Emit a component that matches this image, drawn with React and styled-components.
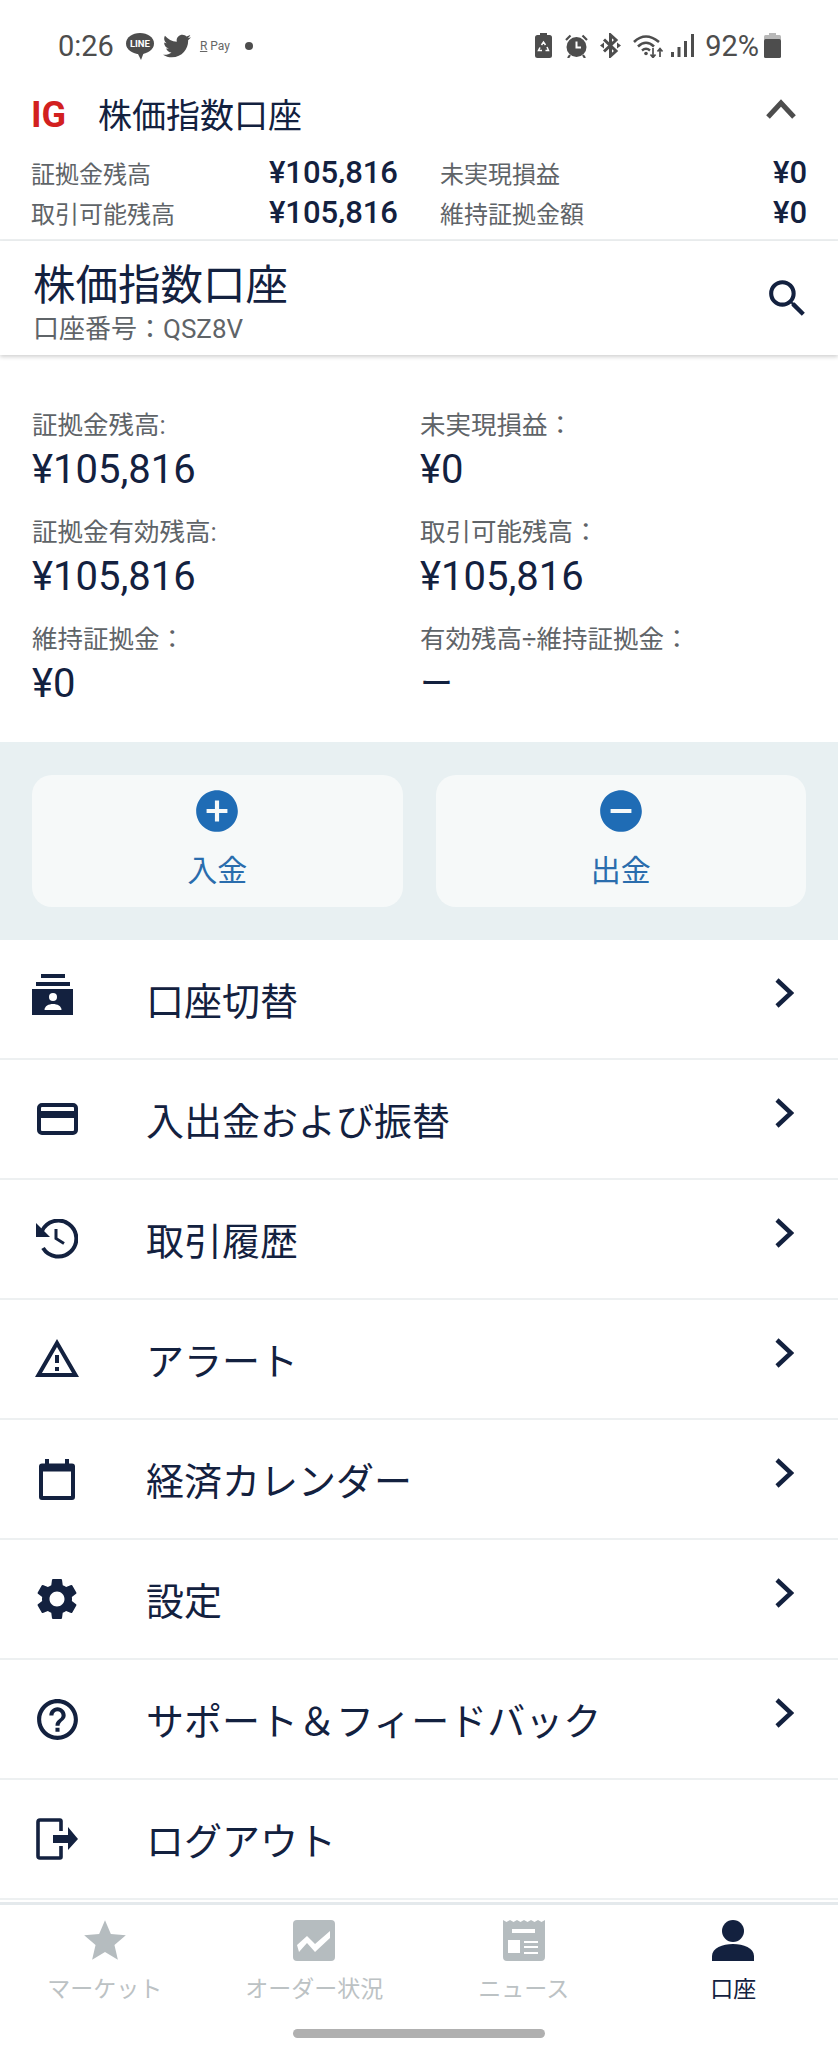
import styled, { createGlobalStyle } from "styled-components"
import { FaTwitter } from "react-icons/fa"
import {
    MdAddCircle,
    MdRemoveCircle,
    MdOutlineWarningAmber,
    MdSettings,
    MdHelpOutline,
    MdSearch,
    MdStar,
} from "react-icons/md"

const NAVY = "#13213f"
const GREY = "#5f6468"
const STATUS = "#4d4d4d"
const TAB_OFF = "#b5bcbf"

const GlobalStyle = createGlobalStyle`
    html, body {
        margin: 0;
        padding: 0;
        background: #fff;
    }
    * {
        box-sizing: border-box;
    }
    body {
        font-family: Roboto, "Noto Sans CJK JP", sans-serif;
        color: ${NAVY};
    }
`

const RecycleBattery = () => (
    <svg width="17" height="25" viewBox="0 0 17 25">
        <rect x="5" y="0" width="7" height="3" fill={STATUS} />
        <rect x="0" y="2" width="17" height="23" rx="2.5" fill={STATUS} />
        <path d="M6.5 12 L8.5 9 L10.5 12 M12 14 L13.5 17.5 L10.5 17.5 M7 17.5 L3.5 17.5 L5 14.5" stroke="#fff" strokeWidth="1.5" fill="none" />
    </svg>
)

const AlarmClock = () => (
    <svg width="23" height="24" viewBox="0 0 23 24">
        <circle cx="11.5" cy="13" r="10" fill={STATUS} />
        <path d="M11.5 7.5 V13.5 H16" stroke="#fff" strokeWidth="2" fill="none" />
        <path d="M1 6 L5.5 1.5 M22 6 L17.5 1.5" stroke={STATUS} strokeWidth="2.2" />
        <path d="M5 21 L3 24 M18 21 L20 24" stroke={STATUS} strokeWidth="2.2" />
    </svg>
)

const Bluetooth = () => (
    <svg width="21" height="25" viewBox="0 0 21 25">
        <path d="M4 6.5 L16 18 L10.5 23 V2 L16 7 L4 18.5" stroke={STATUS} strokeWidth="3" fill="none" />
        <path d="M0 12.5 L4 9.5 V15.5 Z M21 12.5 L17 9.5 V15.5 Z" fill={STATUS} />
    </svg>
)

const WifiSignal = () => (
    <svg width="31" height="24" viewBox="0 0 31 24">
        <path d="M1 8 Q12.5 -3 26 8" stroke={STATUS} strokeWidth="2.6" fill="none" />
        <path d="M5 12.5 Q13 5 21 12.5" stroke={STATUS} strokeWidth="2.6" fill="none" />
        <path d="M9 16.5 Q13 13 17 16.5" stroke={STATUS} strokeWidth="2.4" fill="none" />
        <circle cx="13" cy="19.5" r="1.8" fill={STATUS} />
        <path d="M20 14 V23 M17.5 20.5 L20 23.5 L22.5 20.5 M27 23 V15 M24.5 17.5 L27 14.5 L29.5 17.5" stroke={STATUS} strokeWidth="1.7" fill="none" />
    </svg>
)

const SignalBars = () => (
    <svg width="23" height="23" viewBox="0 0 23 23" fill={STATUS}>
        <rect x="0" y="18" width="3" height="5" />
        <rect x="6.5" y="13" width="3" height="10" />
        <rect x="13" y="7" width="3" height="16" />
        <rect x="20" y="0" width="3" height="23" />
    </svg>
)

const Battery = () => (
    <svg width="17" height="25" viewBox="0 0 17 25">
        <rect x="5" y="0" width="7" height="3" fill="#b8b8b8" />
        <rect x="0" y="2" width="17" height="5" rx="1.5" fill="#b8b8b8" />
        <rect x="0" y="6" width="17" height="19" rx="1.5" fill={STATUS} />
    </svg>
)

const AccountCard = () => (
    <svg width="50" height="42" viewBox="0 0 50 42" fill={NAVY}>
        <rect x="9" y="0" width="24" height="4" />
        <rect x="4" y="8" width="34" height="4" />
        <rect x="0" y="15" width="41" height="26" />
        <circle cx="21" cy="23" r="4" fill="#fff" />
        <path d="M12.5 36 C12.5 28 29.5 28 29.5 36 Z" fill="#fff" />
    </svg>
)

const PaymentCard = () => (
    <svg width="41" height="32" viewBox="0 0 41 32">
        <rect x="2" y="2" width="37" height="28" rx="3" fill="none" stroke={NAVY} strokeWidth="4" />
        <rect x="2" y="8" width="37" height="7" fill={NAVY} />
    </svg>
)

const HistoryClock = () => (
    <svg width="42" height="40" viewBox="0 0 42 40" fill="none" stroke={NAVY}>
        <path d="M6 12 A18 18 0 1 1 7 29" strokeWidth="4" />
        <path d="M0 4 V18 H14 Z" fill={NAVY} stroke="none" />
        <path d="M20 10 V19.5 L28 24.5" strokeWidth="3" />
    </svg>
)

const CalendarPage = () => (
    <svg width="36" height="41" viewBox="0 0 36 41" fill={NAVY}>
        <rect x="6" y="0" width="4" height="6" />
        <rect x="26" y="0" width="4" height="6" />
        <path fillRule="evenodd" d="M3 4.5 H33 Q36 4.5 36 7.5 V38 Q36 41 33 41 H3 Q0 41 0 38 V7.5 Q0 4.5 3 4.5 Z M4 12.5 V37 H32 V12.5 Z" />
    </svg>
)

const Logout = () => (
    <svg width="42" height="42" viewBox="0 0 42 42" fill={NAVY}>
        <path d="M25 13 V3 Q25 2 24 2 H4 Q2 2 2 4 V38 Q2 40 4 40 H24 Q25 40 25 39 V28" stroke={NAVY} strokeWidth="3.6" fill="none" />
        <path d="M17 17 H32 V9 L42 21 L32 32 V25 H17 Z" />
    </svg>
)

const ChartTab = () => (
    <svg width="42" height="41" viewBox="0 0 42 41">
        <rect width="42" height="41" rx="4" fill={TAB_OFF} />
        <path d="M4 25 L14 16 L22 24 L37 11 V18 L22 32 L14 23 L6 32 Z" fill="#fff" />
    </svg>
)

const NewsTab = () => (
    <svg width="42" height="41" viewBox="0 0 42 41">
        <path d="M0 0 L3.5 2 L7 0 L10.5 2 L14 0 L17.5 2 L21 0 L24.5 2 L28 0 L31.5 2 L35 0 L38.5 2 L42 0 V37 Q42 41 38 41 H4 Q0 41 0 37 Z" fill={TAB_OFF} />
        <rect x="9" y="9" width="23" height="4" fill="#fff" />
        <rect x="5" y="20" width="12" height="13" fill="#fff" />
        <rect x="21" y="21" width="14" height="2" fill="#fff" />
        <rect x="21" y="26" width="14" height="2" fill="#fff" />
        <rect x="21" y="32" width="14" height="2" fill="#fff" />
    </svg>
)

const PersonTab = () => (
    <svg width="42" height="41" viewBox="0 0 42 41" fill={NAVY}>
        <circle cx="21" cy="11" r="11" />
        <path d="M0 41 V36 C0 20 42 20 42 36 V41 Z" />
    </svg>
)

const ChevronRight = () => (
    <svg width="20" height="32" viewBox="0 0 20 32" fill="none">
        <path d="M3 3 L17 16 L3 29" stroke={NAVY} strokeWidth="4.5" />
    </svg>
)

const ChevronUp = () => (
    <svg width="30" height="20" viewBox="0 0 30 20" fill="none">
        <path d="M2 18 L15 4 L28 18" stroke={STATUS} strokeWidth="5" />
    </svg>
)

const balances = [
    ["証拠金残高:", "¥105,816"],
    ["未実現損益：", "¥0"],
    ["証拠金有効残高:", "¥105,816"],
    ["取引可能残高：", "¥105,816"],
    ["維持証拠金：", "¥0"],
    ["有効残高÷維持証拠金：", "ー"],
]

const menuItems = [
    { label: "口座切替", icon: <AccountCard />, arrow: true, lift: true },
    { label: "入出金および振替", icon: <PaymentCard />, arrow: true },
    { label: "取引履歴", icon: <HistoryClock />, arrow: true },
    { label: "アラート", icon: <MdOutlineWarningAmber size={48} />, arrow: true },
    { label: "経済カレンダー", icon: <CalendarPage />, arrow: true },
    { label: "設定", icon: <MdSettings size={50} />, arrow: true },
    { label: "サポート＆フィードバック", icon: <MdHelpOutline size={49} />, arrow: true },
    { label: "ログアウト", icon: <Logout />, arrow: false },
]

const tabs = [
    { label: "マーケット", icon: <MdStar size={50} color={TAB_OFF} /> },
    { label: "オーダー状況", icon: <ChartTab /> },
    { label: "ニュース", icon: <NewsTab /> },
    { label: "口座", icon: <PersonTab />, active: true },
]

const App = () => {
    return (
        <Page>
            <GlobalStyle />
            <StatusBar>
                <StatusGroup>
                    <Clock>0:26</Clock>
                    <StatusItem $gap={12}><LineBadge>LINE</LineBadge></StatusItem>
                    <StatusItem $gap={9}><FaTwitter size={28} color={STATUS} /></StatusItem>
                    <StatusItem $gap={9}><PayMark><u>R</u> Pay</PayMark></StatusItem>
                    <StatusItem $gap={19}><StatusDot /></StatusItem>
                </StatusGroup>
                <StatusGroup>
                    <RecycleBattery />
                    <StatusItem $gap={13}><AlarmClock /></StatusItem>
                    <StatusItem $gap={12}><Bluetooth /></StatusItem>
                    <StatusItem $gap={12}><WifiSignal /></StatusItem>
                    <StatusItem $gap={7}><SignalBars /></StatusItem>
                    <StatusItem $gap={11}><BatteryText>92%</BatteryText></StatusItem>
                    <StatusItem $gap={5}><Battery /></StatusItem>
                </StatusGroup>
            </StatusBar>

            <AccountStrip>
                <StripHeader>
                    <Logo>IG</Logo>
                    <StripTitle>株価指数口座</StripTitle>
                    <Collapse><ChevronUp /></Collapse>
                </StripHeader>
                <StripGrid>
                    <StripPair><StripLabel>証拠金残高</StripLabel><StripValue>¥105,816</StripValue></StripPair>
                    <StripPair><StripLabel>未実現損益</StripLabel><StripValue>¥0</StripValue></StripPair>
                    <StripPair><StripLabel>取引可能残高</StripLabel><StripValue>¥105,816</StripValue></StripPair>
                    <StripPair><StripLabel>維持証拠金額</StripLabel><StripValue>¥0</StripValue></StripPair>
                </StripGrid>
            </AccountStrip>

            <TopBar>
                <TitleBlock>
                    <PageTitle>株価指数口座</PageTitle>
                    <AccountNo>口座番号：QSZ8V</AccountNo>
                </TitleBlock>
                <MdSearch size={49} />
            </TopBar>

            <BalanceGrid>
                {balances.map(([label, value]) => (
                    <div key={label}>
                        <BalanceLabel>{label}</BalanceLabel>
                        <BalanceValue $dash={value === "ー"}>{value}</BalanceValue>
                    </div>
                ))}
            </BalanceGrid>

            <FundsBand>
                <FundsButton>
                    <MdAddCircle size={50} />
                    <span>入金</span>
                </FundsButton>
                <FundsButton>
                    <MdRemoveCircle size={50} />
                    <span>出金</span>
                </FundsButton>
            </FundsBand>

            <Menu>
                {menuItems.map((item) => (
                    <MenuRow key={item.label}>
                        <MenuIcon $lift={item.lift}>{item.icon}</MenuIcon>
                        <MenuLabel>{item.label}</MenuLabel>
                        {item.arrow && <MenuArrow><ChevronRight /></MenuArrow>}
                    </MenuRow>
                ))}
            </Menu>

            <TabBar>
                <Tabs>
                    {tabs.map((tab) => (
                        <Tab key={tab.label} $active={tab.active}>
                            <TabIcon>{tab.icon}</TabIcon>
                            <span>{tab.label}</span>
                        </Tab>
                    ))}
                </Tabs>
                <HomeBar />
            </TabBar>
        </Page>
    )
}

export default App

const Page = styled.div`
    width: 838px;
    height: 2048px;
    display: flex;
    flex-direction: column;
    overflow: hidden;
    background: #fff;
`

const StatusBar = styled.div`
    height: 92px;
    padding: 0 57px 1px 58px;
    display: flex;
    align-items: center;
    justify-content: space-between;
    color: ${STATUS};
`

const StatusGroup = styled.div`
    display: flex;
    align-items: center;
`

const StatusItem = styled.span`
    display: flex;
    margin-left: ${(props) => props.$gap}px;
`

const Clock = styled.span`
    font-size: 29px;
`

const LineBadge = styled.span`
    width: 28px;
    height: 21px;
    margin-bottom: 5px;
    border-radius: 50%;
    background: ${STATUS};
    color: #fff;
    font-size: 9.5px;
    font-weight: 700;
    display: flex;
    align-items: center;
    justify-content: center;
    position: relative;

    &::after{
        content: "";
        position: absolute;
        left: 11px;
        bottom: -6px;
        border-top: 8px solid ${STATUS};
        border-left: 4px solid transparent;
        border-right: 3px solid transparent;
    }
`

const PayMark = styled.span`
    font-size: 12px;
    width: 26px;
    white-space: nowrap;
    color: #666;
`

const StatusDot = styled.span`
    width: 8px;
    height: 8px;
    border-radius: 50%;
    background: ${STATUS};
`

const BatteryText = styled.span`
    font-size: 29px;
`

const AccountStrip = styled.div`
    height: 149px;
    border-bottom: 2px solid #edf0f1;
`

const StripHeader = styled.div`
    height: 46px;
    padding: 0 42px 0 31px;
    display: flex;
    align-items: center;
`

const Logo = styled.span`
    width: 67px;
    font-size: 36px;
    font-weight: 700;
    color: #d2201f;
`

const StripTitle = styled.span`
    flex: 1;
    font-size: 34px;
    margin-bottom: 3px;
`

const Collapse = styled.span`
    display: flex;
    margin-bottom: 12px;
`

const StripGrid = styled.div`
    margin-top: 14px;
    padding: 0 31px;
    display: grid;
    grid-template-columns: 1fr 1fr;
    column-gap: 42px;
`

const StripPair = styled.div`
    height: 40px;
    display: flex;
    align-items: center;
    justify-content: space-between;
`

const StripLabel = styled.span`
    font-size: 24px;
    color: ${GREY};
`

const StripValue = styled.span`
    font-size: 31px;
    font-weight: 500;
`

const TopBar = styled.div`
    height: 114px;
    padding: 0 26px 0 33px;
    display: flex;
    align-items: center;
    justify-content: space-between;
    box-shadow: 0 2px 4px rgba(0, 0, 0, 0.18);
    position: relative;
`

const TitleBlock = styled.div`
    margin-top: 4px;
`

const PageTitle = styled.div`
    font-size: 42.5px;
    line-height: 58px;
`

const AccountNo = styled.div`
    font-size: 26px;
    line-height: 28px;
    color: ${GREY};
`

const BalanceGrid = styled.div`
    height: 387px;
    padding: 54px 0 0 32px;
    display: grid;
    grid-template-columns: 388px 1fr;
    grid-auto-rows: 107px;
`

const BalanceLabel = styled.div`
    font-size: 25.5px;
    line-height: 32px;
    color: ${GREY};
`

const BalanceValue = styled.div`
    font-size: ${(props) => (props.$dash ? 33 : 40)}px;
    line-height: 58px;
`

const FundsBand = styled.div`
    height: 198px;
    padding: 33px 32px;
    background: #e8f0f2;
    display: grid;
    grid-template-columns: 1fr 1fr;
    column-gap: 33px;
`

const FundsButton = styled.div`
    border-radius: 20px;
    background: #f6f9f9;
    padding-top: 11px;
    display: flex;
    flex-direction: column;
    align-items: center;
    color: #1f6cb5;

    span{
        margin-top: 15px;
        font-size: 30px;
        line-height: 40px;
        color: #2a6dad;
    }
`

const Menu = styled.div`
    flex: 1;
`

const MenuRow = styled.div`
    height: 120px;
    padding: 0 44px 0 32px;
    display: flex;
    align-items: center;
    border-bottom: 2px solid #edf0f1;
`

const MenuIcon = styled.div`
    width: 50px;
    margin-right: 64px;
    margin-bottom: ${(props) => (props.$lift ? 8 : 0)}px;
    display: flex;
    justify-content: center;
    color: ${NAVY};
`

const MenuLabel = styled.div`
    flex: 1;
    font-size: 38px;
    margin-bottom: 2px;
`

const MenuArrow = styled.div`
    display: flex;
    margin-bottom: 13px;
`

const TabBar = styled.div`
    height: 146px;
    border-top: 3px solid #e4e9ec;
`

const Tabs = styled.div`
    padding-top: 15px;
    display: grid;
    grid-template-columns: repeat(4, 1fr);
`

const Tab = styled.div`
    display: flex;
    flex-direction: column;
    align-items: center;
    font-size: 23px;
    line-height: 32px;
    color: ${(props) => (props.$active ? NAVY : "#bcc2c4")};
`

const TabIcon = styled.div`
    height: 41px;
    margin-bottom: 13px;
    display: flex;
    align-items: center;
    justify-content: center;
`

const HomeBar = styled.div`
    width: 252px;
    height: 9px;
    margin: 23px auto 0;
    border-radius: 5px;
    background: #b0b0b0;
`
